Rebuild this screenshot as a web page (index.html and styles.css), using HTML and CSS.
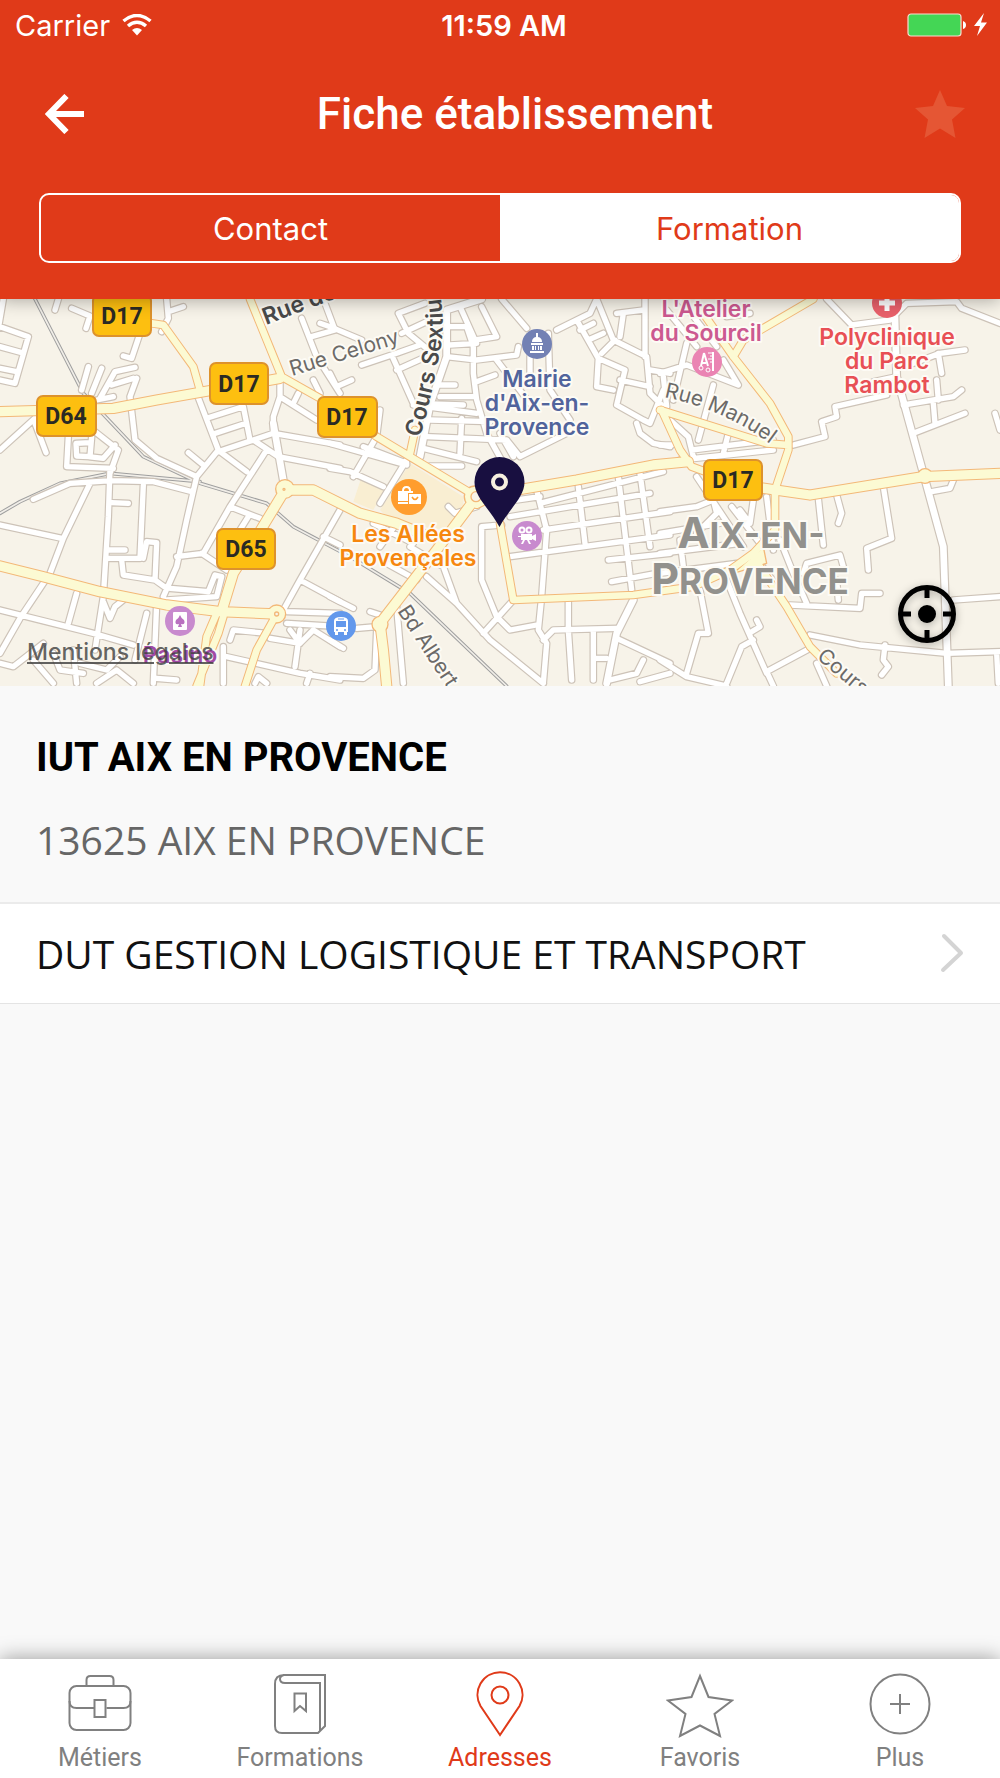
FILE: index.html
```html
<!DOCTYPE html>
<html lang="fr">
<head>
    <meta charset="UTF-8">
    <meta name="viewport" content="width=device-width, initial-scale=1.0">
    <title>Fiche établissement</title>
    <link rel="stylesheet" href="styles.css">
</head>
<body>
    <header class="header">
        <div class="status-bar">
            <div class="status-left">
                <span>Carrier</span>
                <svg class="wifi" width="30" height="22" viewBox="0 0 30 22" aria-hidden="true">
                    <path d="M1.500 7 Q15 -4 28.500 7" fill="none" stroke="#fff" stroke-width="3.500"/>
                    <path d="M6 12 Q15 4.500 24 12" fill="none" stroke="#fff" stroke-width="3.500"/>
                    <path d="M10 16 Q15 12 20 16 L15 21.500 Z" fill="#fff"/>
                </svg>
            </div>
            <span class="status-time">11:59 AM</span>
            <div class="status-right">
                <svg width="82" height="24" viewBox="0 0 82 24" aria-hidden="true">
                    <rect x="1" y="1" width="53" height="22" rx="3" fill="#44d655" stroke="#fbd9cf" stroke-width="1.200"/>
                    <path d="M56 8 q3 1 3 4 t-3 4 z" fill="#fff"/>
                    <path d="M77 0 L67 13 h6 L70 23 L80 9.500 h-6 z" fill="#fff"/>
                </svg>
            </div>
        </div>
        <div class="title-bar">
            <button type="button" class="icon-button" aria-label="Retour">
                <svg width="40" height="40" viewBox="0 0 40 40">
                    <path d="M21.500 2 L4 20 L21.500 38 M4 20 H39" fill="none" stroke="#fff" stroke-width="6"/>
                </svg>
            </button>
            <h1>Fiche établissement</h1>
            <button type="button" class="icon-button" aria-label="Ajouter aux favoris">
                <svg width="50" height="50" viewBox="0 0 50 50">
                    <path d="M25 1 L32 17 L50 19 L37 30.500 L40.500 49 L25 39.500 L9.500 49 L13 30.500 L0 19 L18 17 Z" fill="#e55634"/>
                </svg>
            </button>
        </div>
        <div class="segments">
            <button type="button" class="segment">Contact</button>
            <button type="button" class="segment active">Formation</button>
        </div>
    </header>

    <main class="content">
        <section class="map">
            <svg class="map-canvas" viewBox="0 299 1000 387" role="img" aria-label="Plan d'Aix-en-Provence">
                <defs>
                    <g id="streets">
                        <path d="M10 27L-5 115M0 110L85 140L45 280L0 270M0 170L65 188M0 235L50 245M175 27L165 60M215 55L270 78L258 115M500 27L505 85L485 125M505 65L550 50M420 130L395 205L370 198M265 230L245 300M305 235L275 310M405 232L345 245L300 325M400 265L335 285M410 265L390 320L405 450L470 505L590 560M340 320L290 330M105 385L0 480M105 400L138 488M205 440L200 530L340 535M275 440L270 500L230 498L228 460L270 458M265 500L310 505L345 465M285 425L355 480L330 550M330 535L325 680L310 920L285 1080M100 628L210 580L335 572L460 575L575 605M270 580L190 745L150 850L60 985L0 1090M0 705L185 745M335 638L385 640M430 585L420 805L320 805M320 780L375 780M430 805L440 755L470 758L465 870L370 855L365 810M465 870L500 895M590 310L655 480L590 560L560 690L530 830L490 920M620 385L730 350L750 450M640 432L738 400M655 485L820 430L820 380L840 320L840 270M820 430L1020 465M565 488L610 525M660 485L740 545M760 450L835 500L1020 535M800 480L690 650L610 790L530 800M605 790L680 840M690 650L780 685M745 680L720 720M840 320L950 390M895 310L880 340M1020 660L900 870L850 960M970 740L1020 765M900 870L1020 935M510 895L625 905L645 855L665 860L650 920L500 930M860 965L1020 970M860 1000L1020 1010M0 960L140 995L280 1030L400 1065M230 910L205 1000M310 935L330 985L345 950L370 930M470 940L460 1180M440 970L405 1110M0 1120L40 1130L130 1060M100 1110L160 1180M160 1090L180 1140L250 1150M220 1080L230 1180M240 1120L320 1140L360 1100M290 1180L350 1140L400 1180M690 1050L700 1020L800 1030M670 1070L670 1180M680 1100L900 1150L1020 1170M810 1045L900 1060M900 1020L885 1130M870 1020L900 1060L940 1020L1020 1070M470 1165L530 1170M765 1180L775 1160L800 1180M930 1150L920 1180M905 85L950 200L1020 310M935 140L1005 120L970 27M940 270L960 310"/>
                        <path transform="translate(990 0)" d="M-30 100L0 110L95 150M0 250L20 290L65 270M285 40L205 70L235 130L320 200M215 130L290 95M95 225L200 190L270 165M185 195L250 340L400 345M200 240L300 195M350 200L440 210L560 195L565 170M360 165L440 160M360 110L410 110L430 170L430 250L440 330L470 430L520 520M390 50L435 150L500 140L455 50M320 285L375 285M330 320L430 320M250 345L440 370M300 390L480 395M395 385L390 490M290 440L530 450M280 475L380 500L440 515M440 275L495 255M515 27L590 115M500 210L600 340M600 200L600 250M655 130L660 300L720 390M710 430L570 500L530 450M510 430L550 500M680 120L780 70L800 27M740 90L805 205L885 240L860 345L940 390L960 400L1000 300M800 27L850 150L950 200L960 310L1000 350M860 70L940 60M945 27L945 200M805 205L800 290L850 300M870 270L960 290M750 120L790 100M775 150L820 130M815 190L855 150M880 70L870 140M920 400L930 430L970 460L1020 470M960 240L1020 250M150 360L140 440L70 560M0 460L230 525M0 535L60 545L160 590M100 470L230 520M230 510L150 640M300 528L395 528M355 650L375 670L440 650M130 700L250 760M150 770L200 700M240 770L340 830L380 940L480 1050L640 1180M290 860L380 940M170 820L260 870M515 705L455 710L455 870L500 980L540 1020L620 1005M550 930L460 1030M540 680L660 660L960 610M560 630L630 620M620 600L650 720L635 920L625 1020L650 1060L640 1180M640 720L1020 665M540 800L1020 735M745 590L765 760M865 560L905 900M930 550L960 770M835 810L1020 790M845 875L980 850M630 640L1000 545M715 930L715 1020L725 1170M640 1050L670 1020L860 1015M790 1020L790 1170M800 1105L830 1105M860 1045L1020 1120M940 1110L920 1150L840 1170M930 1175L1020 1150M200 950L220 1180M140 1020L135 1140L100 1165L0 1160M80 1015L140 1010M0 920L70 955M120 965L150 975M0 1050L40 1075"/>
                        <path transform="translate(1980 0)" d="M80 160L40 330M0 250L80 225L235 285L205 235L190 210M160 285L115 450M270 70L200 80M20 60L110 170M60 27L170 170M10 260L20 350M30 390L85 440L100 500M0 465L35 465M95 480L340 450M60 510L340 480M205 430L190 490M400 465L495 440L485 395L530 380L525 350L680 315M500 27L575 105L690 90L740 40L890 35L905 55L1020 100M915 180L840 190L760 220M835 190L845 250M830 270L835 330M730 345L880 320L905 300M820 340L825 400M760 430L915 370M640 275L710 260M1005 370L1020 420M815 605L870 595L880 570M475 625L490 765M530 615L545 670L535 700M670 590L695 745L620 775L625 840M430 850L440 820L540 795L550 830M360 750L400 850L440 940M390 945L600 955L605 910L660 910M535 930L530 870M450 1035L600 1065L860 1090L1020 1085M675 1065L670 1110L685 1130L665 1155M880 930L1020 920M1010 1090L1015 1180M450 1075L320 1145L340 1188M200 870L240 970L320 1150M275 1025L300 1010L290 990M120 900L145 1030L115 1030L80 1150M280 1050L245 1070L200 1180M0 1110L80 1160L200 1188M470 1120L500 1188M0 665L110 650L160 630M0 730L180 700M0 790L240 760M0 850L230 820M60 750L70 830M110 730L170 670L160 630M110 560L250 770M280 630L270 700L240 660M215 650L300 760M320 620L340 780M300 820L360 900"/>
                    </g>
                    <g id="avenues">
                        <path d="M820 400L855 600M1445 27L1340 60L1340 200L1290 345L1260 500M1900 930L1850 1030L1820 1180M2685 80L2690 260L2770 550L2830 770L2845 1188"/>
                    </g>
                    <g id="secondary">
                        <path d="M455 100L490 105L580 230L600 300M750 27L845 260L960 325L1130 440L1230 500L1405 605M650 970L620 1040L600 1188M670 980L655 1030L590 1188M830 972L770 1080L735 1188M1245 420L1230 490M1500 700L1540 930L1900 915L2080 890L2190 840L2260 790L2325 720L2325 600L2365 480L2365 440L2310 340L2200 200L2110 70M2200 200L2230 150L2440 27M1985 360L2040 480L2075 530L2130 550M1980 360L2300 460L2365 465M2260 800L2360 950L2430 1070L2510 1150"/>
                    </g>
                    <g id="main-roads">
                        <path d="M0 365L340 355L470 330L840 265M0 828L130 860L300 905L500 945L660 965L830 972M665 965L700 850L770 740L855 600L940 600L1080 670L1190 700L1300 745M1415 640L1310 780L1140 1000L1150 1080L1160 1188M1430 640L1490 610L1730 570L1960 525L2065 515M2260 590L2430 615L2770 560L3000 550"/>
                    </g>
                    <g id="rails">
                        <path d="M105 27L250 310L430 500L600 580L800 640L880 710L1050 800L1230 910L1520 1188M0 670L60 635L180 580L330 550L600 575"/>
                    </g>
                    <path id="cours-sextius" d="M420 438 Q431 400 437 365 Q450 318 434 270"/>
                    <path id="rue-manuel" d="M664 397 Q728 410 778 450"/>
                </defs>

                <rect x="0" y="299" width="1000" height="387" fill="#f7f3e9"/>
                <g class="roads" transform="translate(0 290) scale(.33333)">
                    <path d="M1230 520L1390 620L1390 660L1340 720L1180 700L1140 660ZM1085 560L1155 595L1120 660L1060 635Z" fill="#f9eed2"/>
                    <use href="#rails" stroke="#9f9f9f" stroke-width="11"/>
                    <use href="#rails" stroke="#f1eee8" stroke-width="5"/>
                    <use href="#streets" stroke="#cdc3b8" stroke-width="23"/>
                    <use href="#avenues" stroke="#cdc3b8" stroke-width="27"/>
                    <use href="#streets" stroke="#fff" stroke-width="16"/>
                    <use href="#avenues" stroke="#fff" stroke-width="20"/>
                    <use href="#secondary" stroke="#f3b878" stroke-width="26"/>
                    <use href="#main-roads" stroke="#f3b878" stroke-width="34"/>
                    <g fill="#fcfad3" stroke="#f3b878" stroke-width="4">
                        <circle cx="855" cy="597" r="28"/>
                        <circle cx="830" cy="972" r="27"/>
                        <circle cx="1425" cy="620" r="32"/>
                        <circle cx="1140" cy="1003" r="24"/>
                        <circle cx="2775" cy="558" r="22"/>
                        <path d="M2200 850L2290 770L2300 820Z"/>
                    </g>
                    <use href="#secondary" stroke="#fcfad3" stroke-width="20"/>
                    <use href="#main-roads" stroke="#fcfad3" stroke-width="28"/>
                    <g fill="#f7f3e9" stroke="#f3b878" stroke-width="4">
                        <circle cx="830" cy="972" r="6"/>
                        <circle cx="852" cy="598" r="3"/>
                        <circle cx="1428" cy="620" r="15"/>
                    </g>
                </g>

                <g class="street-names">
                    <text class="strong" x="266" y="325" transform="rotate(-21 266 325)">Rue de</text>
                    <text x="292" y="376" transform="rotate(-17 292 376)">Rue Celony</text>
                    <text class="strong"><textPath href="#cours-sextius">Cours Sextius</textPath></text>
                    <text><textPath href="#rue-manuel">Rue Manuel</textPath></text>
                    <text x="397" y="611" transform="rotate(57 397 611)">Bd Albert</text>
                    <text x="816" y="658" transform="rotate(40 816 658)">Cours</text>
                </g>

                <g class="shields">
                    <rect x="93" y="295" width="58" height="41" rx="6"/>
                    <rect x="210" y="363" width="58" height="41" rx="6"/>
                    <rect x="37" y="396" width="59" height="40" rx="6"/>
                    <rect x="318" y="397" width="59" height="40" rx="6"/>
                    <rect x="217" y="529" width="58" height="40" rx="6"/>
                    <rect x="704" y="460" width="58" height="40" rx="6"/>
                    <text x="122" y="324">D17</text>
                    <text x="239" y="392">D17</text>
                    <text x="66" y="424">D64</text>
                    <text x="347" y="425">D17</text>
                    <text x="246" y="557">D65</text>
                    <text x="733" y="488">D17</text>
                </g>

                <g class="city">
                    <text x="751" y="548">A<tspan class="small">IX-EN-</tspan></text>
                    <text x="750" y="594">P<tspan class="small">ROVENCE</tspan></text>
                </g>

                <g class="places">
                    <g fill="#51649c">
                        <text x="537" y="387">Mairie</text>
                        <text x="537" y="411">d'Aix-en-</text>
                        <text x="537" y="435">Provence</text>
                    </g>
                    <g fill="#f6870f">
                        <text x="408" y="542">Les Allées</text>
                        <text x="408" y="566">Provençales</text>
                    </g>
                    <g fill="#cc5990">
                        <text x="706" y="317">L'Atelier</text>
                        <text x="706" y="341">du Sourcil</text>
                    </g>
                    <g fill="#e85055">
                        <text x="887" y="345">Polyclinique</text>
                        <text x="887" y="369">du Parc</text>
                        <text x="887" y="393">Rambot</text>
                    </g>
                    <text x="180" y="663" fill="#a14aa5">Pasino</text>
                </g>

                <!-- mairie -->
                <g transform="translate(537 344)" fill="#fff">
                    <circle r="15" fill="#7381b4"/>
                    <path d="M-1 -11h2v4a5 5 0 0 1 4 5h-10a5 5 0 0 1 4 -5zM-6 -1h12v2h-12zM-5 2h2v4h-2zM-2 2h1v4h-1zM1 2h1v4h-1zM3 2h2v4h-2zM-7 7h14v2h-14z"/>
                </g>
                <!-- centre commercial -->
                <g transform="translate(409 497)" fill="#fff">
                    <circle r="18" fill="#ff9d2e"/>
                    <path d="M-11 -6h4q0 -5 4.500 -5t4.500 5h2v2h-5v8h-10zM-5 -6h5q0 -3 -2.500 -3t-2.500 3zM-11 5h10v2h-10zM0 -3h12v10h-12z" fill-rule="evenodd"/>
                    <path d="M3 0q3 5 6 0" fill="none" stroke="#ff9d2e" stroke-width="1.500"/>
                </g>
                <!-- cinéma -->
                <g transform="translate(527 536)" fill="#fff">
                    <circle r="15" fill="#c88ace"/>
                    <circle cx="-5" cy="-6" r="2.500" fill="none" stroke="#fff" stroke-width="2"/>
                    <circle cx="2" cy="-6" r="2.500" fill="none" stroke="#fff" stroke-width="2"/>
                    <path d="M-6 -2h11v2l4 -2v7l-4 -2v1h-3l2 4h-2l-2 -4h-2l-2 4h-2l2 -4h-2v-3h-3v-1h3z"/>
                </g>
                <!-- casino -->
                <g transform="translate(180 621)" fill="#fff">
                    <circle r="15" fill="#c88ace"/>
                    <rect x="-7" y="-9" width="14" height="18" rx="1"/>
                    <path d="M0 -6q1 3 4 5q2 5 -3 4l1 3h-4l1 -3q-5 1 -3 -4q3 -2 4 -5z" fill="#b971c0"/>
                </g>
                <!-- gare routière -->
                <g transform="translate(341 626)" fill="#fff">
                    <circle r="15" fill="#6298ec"/>
                    <path d="M-7 6v-11q0 -4 7 -4t7 4v11h-1v3h-3v-3h-6v3h-3v-3zM-5 -5v6h10v-6zM-3 -7.500h6v1h-6z" fill-rule="evenodd"/>
                    <circle cx="-4" cy="4" r="1" fill="#6298ec"/>
                    <circle cx="4" cy="4" r="1" fill="#6298ec"/>
                </g>
                <!-- institut de beauté -->
                <g transform="translate(707 362)" fill="none" stroke="#fff">
                    <circle r="15" fill="#ea84b3" stroke="none"/>
                    <path d="M-3 -9l-3 13M-3 -9l4 13M-5 1h4" stroke-width="2"/>
                    <circle cx="-6" cy="6" r="2" stroke-width="1"/>
                    <circle cx="1" cy="8" r="2" stroke-width="1"/>
                    <path d="M6 -10v19" stroke-width="2"/>
                    <path d="M1 -9h5M3 -6h3M1 -3h5M3 0h3" stroke-width="1"/>
                </g>
                <!-- clinique -->
                <g transform="translate(887 303)">
                    <circle r="15" fill="#e9616b"/>
                    <path d="M-8 -2.500h5.500v-5.500h5v5.500h5.500v5h-5.500v5.500h-5v-5.500h-5.500z" fill="#fff"/>
                </g>
                <!-- établissement -->
                <path d="M499.500 527C489 508 474.500 497 474.500 482a25 25 0 0 1 50 0C524.500 497 510 508 499.500 527Z" fill="#180f40"/>
                <circle cx="499.500" cy="482" r="6.500" fill="none" stroke="#f7f0df" stroke-width="4"/>
            </svg>
            <a href="#mentions" class="legal">Mentions légales</a>
            <button type="button" class="locate" aria-label="Me localiser">
                <svg width="58" height="58" viewBox="0 0 58 58">
                    <circle cx="29" cy="29" r="26.500" fill="none" stroke="#000" stroke-width="5"/>
                    <path d="M29 3v10M29 45v10M3 29h10M45 29h10" stroke="#000" stroke-width="5"/>
                    <circle cx="29" cy="29" r="9"/>
                </svg>
            </button>
        </section>

        <section class="school">
            <h2>IUT AIX EN PROVENCE</h2>
            <p>13625 AIX EN PROVENCE</p>
        </section>

        <ul class="courses">
            <li>
                <a href="#formation" class="course">
                    <span>DUT GESTION LOGISTIQUE ET TRANSPORT</span>
                    <svg width="24" height="42" viewBox="0 0 24 42" aria-hidden="true">
                        <path d="M4 3 L21 20 L3 37" fill="none" stroke="#d4d4d4" stroke-width="4" stroke-linecap="round" stroke-linejoin="round"/>
                    </svg>
                </a>
            </li>
        </ul>
    </main>

    <nav class="tab-bar">
        <a href="#metiers" class="tab">
            <svg width="68" height="68" viewBox="0 0 68 68">
                <rect x="3.500" y="16" width="61" height="44" rx="7"/>
                <path d="M20.500 16v-6q0 -4 4 -4h19q4 0 4 4v6M3.500 31q0 7 7 7h18M64.500 31q0 7 -7 7h-17"/>
                <rect x="28.500" y="30" width="11" height="17"/>
            </svg>
            <span>Métiers</span>
        </a>
        <a href="#formations" class="tab">
            <svg width="68" height="68" viewBox="0 0 68 68">
                <path d="M18 5H59V56L52 63H16Q9 63 9 56V14Q9 5 18 5Q14 6 14 9Q14 13 19 13H54V61"/>
                <path d="M28.500 23.500H40V41L34 36L28.500 41Z"/>
            </svg>
            <span>Formations</span>
        </a>
        <a href="#adresses" class="tab active">
            <svg width="68" height="68" viewBox="0 0 68 68">
                <path d="M34 65L14.500 36A22.500 22.500 0 1 1 53.500 36Z"/>
                <circle cx="34" cy="25" r="8.500"/>
            </svg>
            <span>Adresses</span>
        </a>
        <a href="#favoris" class="tab">
            <svg width="68" height="68" viewBox="0 0 68 68">
                <path d="M34 6L42.500 27L66 30.500L48.500 44L54 66L34 55.500L14 66L19.500 44L2 30.500L25.500 27Z"/>
            </svg>
            <span>Favoris</span>
        </a>
        <a href="#plus" class="tab">
            <svg width="68" height="68" viewBox="0 0 68 68">
                <circle cx="34" cy="34" r="29.500"/>
                <path d="M34 24v20M24 34h20"/>
            </svg>
            <span>Plus</span>
        </a>
    </nav>
</body>
</html>
```
FILE: styles.css
```css
* {
    margin: 0;
    padding: 0;
    box-sizing: border-box;
}
body {
    min-height: 100vh;
    display: flex;
    flex-direction: column;
    font-family: "Open Sans", sans-serif;
    background-color: #f9f9f9;
    color: #111;
}
button {
    border: none;
    background: none;
    cursor: pointer;
}
a {
    color: inherit;
    text-decoration: none;
}
svg {
    display: block;
}

/* header */
.header {
    position: relative;
    z-index: 1;
    padding-bottom: 36px;
    background-color: #e03a19;
    color: #fff;
    box-shadow: 0 2px 16px rgba(0, 0, 0, 0.3);
}
.status-bar {
    display: grid;
    grid-template-columns: 1fr auto 1fr;
    align-items: center;
    height: 50px;
    padding: 0 11px 0 15px;
    font-family: Inter, sans-serif;
    font-size: 29px;
}
.status-left {
    display: flex;
    align-items: center;
    gap: 12px;
}
.status-time {
    padding-left: 4px;
    font-weight: 600;
}
.status-right {
    display: flex;
    justify-content: flex-end;
}
.title-bar {
    display: flex;
    align-items: center;
    height: 128px;
    padding: 0 35px 0 45px;
}
.icon-button {
    display: flex;
}
h1 {
    flex: 1;
    padding-left: 30px;
    text-align: center;
    font-family: Roboto, sans-serif;
    font-size: 44px;
    font-weight: 500;
}
.segments {
    display: flex;
    height: 70px;
    margin: 15px 39px 0;
    border: 2px solid #fff;
    border-radius: 10px;
    overflow: hidden;
}
.segment {
    flex: 1;
    font-family: Inter, sans-serif;
    font-size: 31px;
    color: #fff;
}
.segment.active {
    background-color: #fff;
    color: #e03a19;
}

/* map */
.content {
    flex: 1;
}
.map {
    position: relative;
}
.map-canvas {
    width: 100%;
    height: auto;
    font-family: Inter, sans-serif;
}
.roads {
    fill: none;
    stroke-linecap: round;
    stroke-linejoin: round;
}
.street-names text,
.places text {
    paint-order: stroke;
    stroke: #fdfbf5;
    stroke-width: 4px;
    stroke-linejoin: round;
}
.street-names text {
    font-size: 21px;
    fill: #6c6a68;
}
.street-names .strong {
    font-size: 23px;
    font-weight: 600;
    fill: #4a4a4a;
}
.places text {
    font-size: 23px;
    font-weight: 600;
    text-anchor: middle;
}
.shields rect {
    fill: #fdbf10;
    stroke: #dd922c;
    stroke-width: 2px;
}
.shields text {
    font-family: Roboto, sans-serif;
    font-size: 23px;
    font-weight: 700;
    text-anchor: middle;
    fill: #2a2a24;
}
.city text {
    font-size: 43px;
    font-weight: 700;
    text-anchor: middle;
    fill: #92918d;
    paint-order: stroke;
    stroke: #fdfbf5;
    stroke-width: 4px;
}
.city .small {
    font-size: 35px;
}
.legal {
    position: absolute;
    left: 27px;
    bottom: 20px;
    font-family: Inter, sans-serif;
    font-size: 23px;
    font-weight: 500;
    color: rgba(60, 60, 60, 0.8);
    text-decoration: underline;
}
.locate {
    position: absolute;
    right: 44px;
    bottom: 43px;
    filter: drop-shadow(0 2px 4px rgba(0, 0, 0, 0.3));
}

/* school */
.school {
    padding: 44px 36px 36px;
}
h2 {
    font-family: Roboto, sans-serif;
    font-size: 40px;
    line-height: 56px;
    color: #000;
}
.school p {
    margin-top: 28px;
    font-size: 39px;
    line-height: 52px;
    color: #666;
}
.courses {
    list-style: none;
}
.course {
    display: flex;
    align-items: center;
    justify-content: space-between;
    height: 102px;
    padding: 0 36px;
    background-color: #fff;
    border-top: 2px solid #ebebeb;
    border-bottom: 1px solid #e4e4e4;
    font-size: 39px;
}

/* tab bar */
.tab-bar {
    display: flex;
    background-color: #fff;
    box-shadow: 0 0 20px rgba(0, 0, 0, 0.4);
}
.tab {
    flex: 1;
    display: flex;
    flex-direction: column;
    align-items: center;
    padding-top: 11px;
    font-family: Roboto, sans-serif;
    font-size: 25px;
    line-height: 40px;
    color: #808080;
}
.tab svg {
    fill: none;
    stroke: currentColor;
    stroke-width: 2px;
}
.tab.active {
    color: #e03a19;
}
```
